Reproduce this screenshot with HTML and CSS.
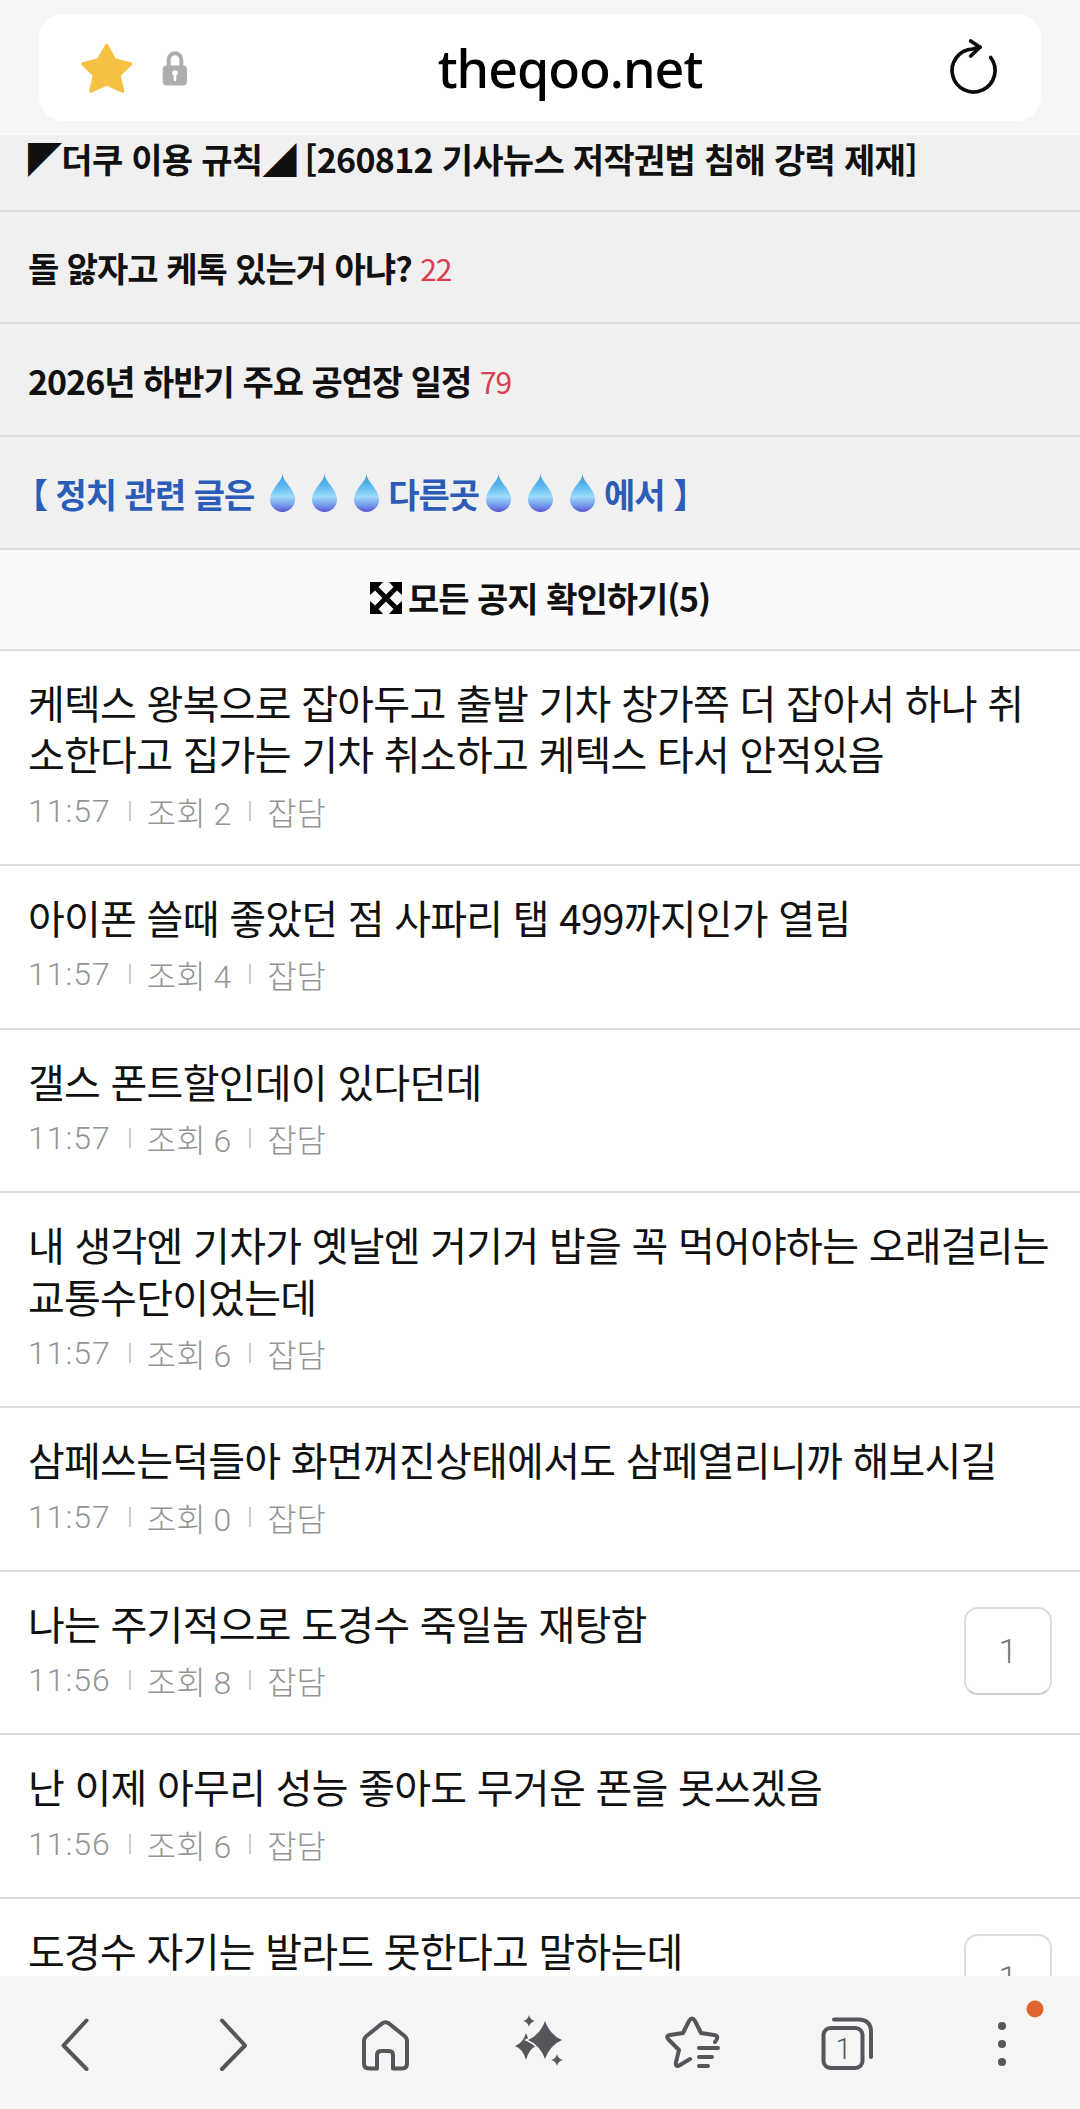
FILE: index.html
```html
<!DOCTYPE html>
<html lang="ko">
<head>
    <meta charset="UTF-8">
    <meta name="viewport" content="width=device-width, initial-scale=1.0">
    <title>theqoo.net</title>
    <link rel="stylesheet" href="styles.css">
</head>
<body>

    <svg class="defs" width="0" height="0">
        <defs>
            <linearGradient id="dropfill" x1="0" y1="0" x2="0" y2="1">
                <stop offset="0" stop-color="#3f98d2"/>
                <stop offset=".3" stop-color="#58b6ee"/>
                <stop offset=".6" stop-color="#9cdcfc"/>
                <stop offset=".85" stop-color="#6f8fe8"/>
                <stop offset="1" stop-color="#5a55d0"/>
            </linearGradient>
            <symbol id="drop" viewBox="0 0 27 38">
                <path d="M13.500 0 C14 8 26 15 26 25.500 A12.500 12.500 0 0 1 1 25.500 C1 15 13 8 13.500 0 Z" fill="url(#dropfill)"/>
            </symbol>
        </defs>
    </svg>

    <div id="screen">

        <!--  Adres çubuğu  -->
        <header class="topbar">
            <div class="urlbox">
                <svg class="star" viewBox="0 0 52 52">
                    <path d="M25.700 3.500 L33.500 18 L49.500 22 L38 33 L41.500 49 L25.700 42 L10 49 L13.500 33 L2 22 L17.500 18 Z" fill="#f6c042" stroke="#f6c042" stroke-width="3.500" stroke-linejoin="round"/>
                </svg>
                <svg class="lock" viewBox="0 0 26 36">
                    <path d="M6.700 17 V9.500 A6.300 6.300 0 0 1 19.300 9.500 V17" fill="none" stroke="#adadad" stroke-width="4"/>
                    <rect x="0.700" y="15.500" width="24.300" height="20" rx="4" fill="#adadad"/>
                    <circle cx="13" cy="23" r="2.800" fill="#fff"/>
                    <path d="M13 23 V30" stroke="#fff" stroke-width="2.600" stroke-linecap="round"/>
                </svg>
                <span class="url">theqoo.net</span>
                <svg class="reload" viewBox="0 0 50 56">
                    <path d="M42.700 17.500 A21.500 21.500 0 1 1 24.700 9 Q28 8 32 7.200" fill="none" stroke="#0c0c0c" stroke-width="3.700" stroke-linecap="round"/>
                    <path d="M22.700 1 L32 7.200 L22.700 16" fill="none" stroke="#0c0c0c" stroke-width="3.700" stroke-linecap="round" stroke-linejoin="round"/>
                </svg>
            </div>
        </header>

        <!--  Duyurular  -->
        <section class="notices">
            <div class="notice first">◤더쿠 이용 규칙◢ [260812 기사뉴스 저작권법 침해 강력 제재]</div>
            <div class="notice">돌 앓자고 케톡 있는거 아냐? <span class="cnt">22</span></div>
            <div class="notice">2026년 하반기 주요 공연장 일정 <span class="cnt">79</span></div>
            <div class="notice blue">【 정치 관련 글은<svg class="drop"><use href="#drop"/></svg><svg class="drop"><use href="#drop"/></svg><svg class="drop last"><use href="#drop"/></svg>다른곳<svg class="drop tight"><use href="#drop"/></svg><svg class="drop"><use href="#drop"/></svg><svg class="drop last"><use href="#drop"/></svg>에서 】</div>
            <div class="notice-all">
                <svg class="arrows" viewBox="0 0 32 32">
                    <path d="M0 0 H13 L8.500 5 L16 12.500 L23.500 5 L19 0 H32 V13 L27 8.500 L19.500 16 L27 23.500 L32 19 V32 H19 L23.500 27 L16 19.500 L8.500 27 L13 32 H0 V19 L5 23.500 L12.500 16 L5 8.500 L0 13 Z"/>
                </svg>
                모든 공지 확인하기(5)
            </div>
        </section>

        <!--  Yazı listesi  -->
        <ul class="list">
            <li class="row">
                <div class="body">
                    <p class="title">케텍스 왕복으로 잡아두고 출발 기차 창가쪽 더 잡아서 하나 취소한다고 집가는 기차 취소하고 케텍스 타서 안적있음</p>
                    <p class="meta"><span>11:57</span><span>조회 2</span><span>잡담</span></p>
                </div>
            </li>
            <li class="row">
                <div class="body">
                    <p class="title">아이폰 쓸때 좋았던 점 사파리 탭 499까지인가 열림</p>
                    <p class="meta"><span>11:57</span><span>조회 4</span><span>잡담</span></p>
                </div>
            </li>
            <li class="row">
                <div class="body">
                    <p class="title">갤스 폰트할인데이 있다던데</p>
                    <p class="meta"><span>11:57</span><span>조회 6</span><span>잡담</span></p>
                </div>
            </li>
            <li class="row">
                <div class="body">
                    <p class="title">내 생각엔 기차가 옛날엔 거기거 밥을 꼭 먹어야하는 오래걸리는 교통수단이었는데</p>
                    <p class="meta"><span>11:57</span><span>조회 6</span><span>잡담</span></p>
                </div>
            </li>
            <li class="row">
                <div class="body">
                    <p class="title">삼페쓰는덕들아 화면꺼진상태에서도 삼페열리니까 해보시길</p>
                    <p class="meta"><span>11:57</span><span>조회 0</span><span>잡담</span></p>
                </div>
            </li>
            <li class="row">
                <div class="body">
                    <p class="title">나는 주기적으로 도경수 죽일놈 재탕함</p>
                    <p class="meta"><span>11:56</span><span>조회 8</span><span>잡담</span></p>
                </div>
                <a class="reply">1</a>
            </li>
            <li class="row">
                <div class="body">
                    <p class="title">난 이제 아무리 성능 좋아도 무거운 폰을 못쓰겠음</p>
                    <p class="meta"><span>11:56</span><span>조회 6</span><span>잡담</span></p>
                </div>
            </li>
            <li class="row">
                <div class="body">
                    <p class="title">도경수 자기는 발라드 못한다고 말하는데</p>
                    <p class="meta"><span>11:56</span><span>조회 9</span><span>잡담</span></p>
                </div>
                <a class="reply">1</a>
            </li>
        </ul>

        <!--  Alt gezinme çubuğu  -->
        <nav class="toolbar">
            <svg class="tool" viewBox="0 0 70 70"><path class="ln" d="M46.500 10.500 L23.500 35.500 L46.500 59"/></svg>
            <svg class="tool" viewBox="0 0 70 70"><path class="ln" d="M28 10.500 L51 35.500 L28 59"/></svg>
            <svg class="tool" viewBox="0 0 70 70"><path class="ln" d="M28 58.500 H20 Q15 58.500 15 53.500 V31 Q15 28 17.500 26 L33 13.500 Q36.500 11 40 13.500 L55.500 26 Q58 28 58 31 V53.500 Q58 58.500 53 58.500 H44 V45 Q44 41 40 41 H32 Q28 41 28 45 Z"/></svg>
            <svg class="tool" viewBox="0 0 70 70">
                <path class="fl" d="M23 23 Q26 33 33 36 Q26 39 23 50 Q20 39 12 36 Q20 33 23 23 Z"/>
                <path class="fl cut" d="M42 11 Q47 25 59 30 Q47 35 42 49 Q37 35 25 30 Q37 25 42 11 Z"/>
                <path class="fl" d="M26 5 Q27 10 32 11 Q27 12 26 17 Q25 12 20 11 Q25 10 26 5 Z"/>
                <path class="fl" d="M54 44 Q55 49 60 50 Q55 51 54 56 Q53 51 48 50 Q53 49 54 44 Z"/>
            </svg>
            <svg class="tool" viewBox="0 0 70 70">
                <path class="ln" d="M57 32 Q62 26 56 25 L43 23 L37 11 Q34 6 31 11 L25 23 L12 25 Q7 26 11 30 L21 40 L18 52 Q17 58 22 55 L32 49"/>
                <path class="ln" d="M41 38 H60 M41 47 H54 M41 56 H50"/>
            </svg>
            <svg class="tool" viewBox="0 0 70 70">
                <rect class="ln" x="11.500" y="18" width="39" height="40" rx="7"/>
                <path class="ln" d="M22 9.500 H46 Q59 9.500 59 22 V47"/>
                <text class="tabnum" x="31.500" y="49">1</text>
            </svg>
            <svg class="tool" viewBox="0 0 70 70">
                <circle class="fl" cx="35" cy="16" r="4"/>
                <circle class="fl" cx="35" cy="34" r="4"/>
                <circle class="fl" cx="35" cy="52" r="4"/>
                <circle class="dot" cx="68" cy="-1" r="8.500"/>
            </svg>
        </nav>
    </div>

</body>
</html>
```

FILE: styles.css
```css
* {
    margin: 0;
    padding: 0;
    box-sizing: border-box;
}

html, body {
    height: 100%;
    background: #fff;
}

body {
    font-family: "Noto Sans CJK KR", "Noto Sans", sans-serif;
    color: #111;
}

.defs {
    position: absolute;
}

#screen {
    position: relative;
    width: 1080px;
    height: 2109px;
    overflow: hidden;
}

/* top bar */
.topbar {
    height: 135px;
    padding: 14px 39px 0;
    background-color: #f5f5f5;
    border-bottom: 2px solid #fafafa;
}
.urlbox {
    position: relative;
    display: flex;
    align-items: center;
    height: 107px;
    padding: 0 43px 0 42px;
    background-color: #fff;
    border-radius: 24px;
}
.star {
    width: 52px;
    height: 52px;
}
.lock {
    width: 26px;
    height: 36px;
    margin-left: 29px;
}
.url {
    position: absolute;
    left: 60px;
    right: 0;
    top: 0;
    text-align: center;
    font-family: "Noto Sans", sans-serif;
    font-size: 52px;
    font-weight: 500;
    line-height: 107px;
    color: #000;
    letter-spacing: -1px;
}
.reload {
    width: 50px;
    height: 56px;
    margin-left: auto;
    overflow: visible;
}

/* notices */
.notice {
    display: flex;
    align-items: center;
    height: 112.8px;
    padding: 2px 0 0 28px;
    font-size: 34px;
    font-weight: 700;
    letter-spacing: -1px;
    white-space: pre-wrap;
    background-color: #f0f0f0;
    border-bottom: 2px solid #dcdcdc;
}
.notice.first {
    height: 76.5px;
    padding-top: 0;
    padding-bottom: 27px;
    letter-spacing: -.7px;
}
.cnt {
    font-size: 30px;
    font-weight: 400;
    color: #d9404f;
}
.notice.blue {
    padding-left: 14px;
    color: #2a5cb8;
}
.drop {
    width: 27px;
    height: 38px;
    margin-left: 15px;
    flex: none;
}
.drop.last {
    margin-right: 8px;
}
.drop.tight {
    margin-left: 6px;
}
.notice-all {
    display: flex;
    align-items: center;
    justify-content: center;
    gap: 6px;
    height: 101.2px;
    padding-bottom: 3px;
    font-size: 34px;
    font-weight: 700;
    letter-spacing: -1px;
    background-color: #fafafa;
    border-bottom: 2px solid #dcdcdc;
}
.arrows {
    width: 32px;
    height: 32px;
}

/* list */
.list {
    list-style: none;
}
.row {
    display: flex;
    align-items: center;
    padding: 26px 28px 33.2px 28px;
    border-bottom: 2px solid #dcdcdc;
}
.body {
    flex: 1;
    min-width: 0;
}
.title {
    font-size: 40px;
    line-height: 51.4px;
    letter-spacing: -.75px;
    color: #111;
}
.meta {
    display: flex;
    align-items: center;
    margin-top: 11px;
    height: 40px;
    font-family: Roboto, "Noto Sans CJK KR", sans-serif;
    font-size: 32px;
    font-weight: 300;
    color: #949494;
}
.meta span:first-child {
    letter-spacing: 1px;
}
.meta span + span {
    margin-left: 18px;
    padding-left: 18px;
    background: linear-gradient(#ccc, #ccc) left center / 2px 20px no-repeat;
}
.reply {
    flex: none;
    width: 88px;
    height: 88px;
    margin: 4px 0 0 20px;
    font-family: Roboto, sans-serif;
    font-size: 34px;
    font-weight: 300;
    line-height: 84px;
    text-align: center;
    color: #777;
    border: 2px solid #ddd;
    border-bottom-color: #ccc;
    border-radius: 14px;
}

/* bottom bar */
.toolbar {
    position: absolute;
    left: 0;
    right: 0;
    bottom: 0;
    display: grid;
    grid-template-columns: repeat(7, 70px);
    justify-content: space-between;
    height: 133px;
    padding: 34px 43px 0 39.5px;
    background-color: #f5f5f5;
}
.tool {
    width: 70px;
    height: 70px;
    overflow: visible;
}
.ln {
    fill: none;
    stroke: #55555b;
    stroke-width: 4;
    stroke-linecap: round;
    stroke-linejoin: round;
}
.fl {
    fill: #55555b;
}
.fl.cut {
    stroke: #f5f5f5;
    stroke-width: 3;
    paint-order: stroke;
}
.dot {
    fill: #e0652c;
}
.tabnum {
    font-family: Roboto, sans-serif;
    font-size: 29px;
    font-weight: 300;
    fill: #55555b;
    text-anchor: middle;
}
```
